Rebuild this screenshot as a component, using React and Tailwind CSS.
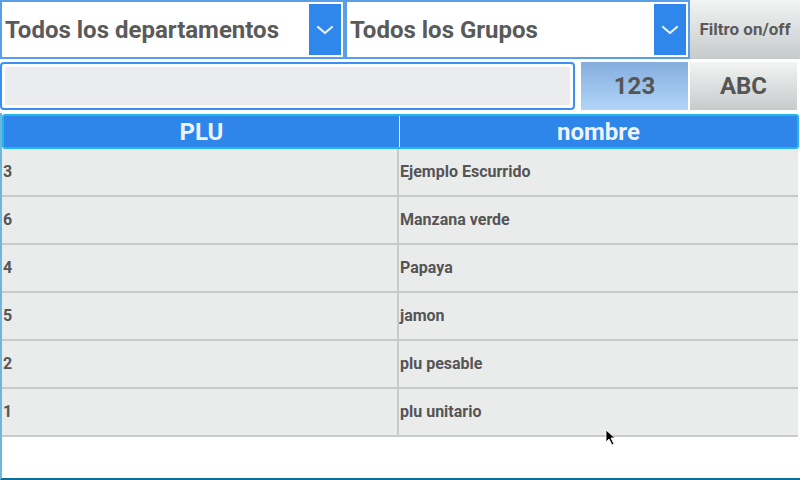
import { useState } from "react";

const rows = [
  { plu: "3", nombre: "Ejemplo Escurrido" },
  { plu: "6", nombre: "Manzana verde" },
  { plu: "4", nombre: "Papaya" },
  { plu: "5", nombre: "jamon" },
  { plu: "2", nombre: "plu pesable" },
  { plu: "1", nombre: "plu unitario" },
];

function Chevron() {
  return (
    <svg width="18" height="12" viewBox="0 0 18 12" fill="none">
      <path d="M2 3 L9 9 L16 3" stroke="#e8f0fb" strokeWidth="2.2" strokeLinecap="round" strokeLinejoin="round" />
    </svg>
  );
}

function Dropdown({ label, className }) {
  return (
    <div className={`h-[59px] border-2 border-[#5a9ee8] bg-white flex items-center p-[2px] ${className}`}>
      <span className="flex-1 pl-[1px] text-[24px] font-bold text-[#5a5a5a] whitespace-nowrap">{label}</span>
      <div className="w-[32px] h-full bg-[#2f87ec] flex items-center justify-center">
        <Chevron />
      </div>
    </div>
  );
}

export default function App() {
  const [mode, setMode] = useState("123");

  return (
    <div className="relative w-[800px] h-[480px] bg-white overflow-hidden" style={{ fontFamily: "Roboto, 'Liberation Sans', sans-serif" }}>
      <div className="flex h-[60px]">
        <Dropdown label="Todos los departamentos" className="w-[345px]" />
        <Dropdown label="Todos los Grupos" className="w-[345px]" />
        <button className="w-[110px] h-[59px] bg-gradient-to-b from-[#f3f4f4] to-[#c6cbcb] text-[17px] font-bold text-[#5a5a5a] whitespace-nowrap">
          Filtro on/off
        </button>
      </div>

      <div className="flex h-[50px] pt-[2px] gap-[6px]">
        <div className="w-[575px] h-[48px] rounded-[4px] border-2 border-[#3d8ff0] p-[3px] bg-white">
          <div className="w-full h-full bg-[#ebeced] rounded-[2px]"></div>
        </div>
        <div className="flex gap-[2px]">
          <button
            onClick={() => setMode("123")}
            className="w-[107px] h-[48px] bg-gradient-to-b from-[#85aede] to-[#b2d4f8] text-[24px] font-bold text-[#555]"
          >
            123
          </button>
          <button
            onClick={() => setMode("ABC")}
            className="w-[107px] h-[48px] bg-gradient-to-b from-[#f3f4f4] to-[#c6cbcb] text-[24px] font-bold text-[#555]"
          >
            ABC
          </button>
        </div>
      </div>

      <div className="mt-[3px] h-[367px] border-l-2 border-[#6fb6dc] border-b-2 border-b-[#0b6f98] flex flex-col">
        <div className="flex h-[35px] bg-[#2e86ea] border-2 border-[#20b8e8] rounded-[3px] mt-[1px] mr-[1px] text-[24px] font-bold text-[#eef3fa]">
          <div className="w-[396px] flex items-center justify-center border-r border-[#e0ecfa]">PLU</div>
          <div className="flex-1 flex items-center justify-center">nombre</div>
        </div>
        {rows.map((r) => (
          <div key={r.plu} className="flex h-[48px] bg-[#eaebeb] border-b-2 border-[#c9caca] text-[16px] font-bold text-[#555] mr-[2px]">
            <div className="w-[397px] flex items-center border-r-2 border-[#c9caca] pl-[1px]">{r.plu}</div>
            <div className="flex-1 flex items-center pl-[1px]">{r.nombre}</div>
          </div>
        ))}
      </div>

      <svg className="absolute left-[605px] top-[429px]" width="12" height="18" viewBox="0 0 12 18">
        <path d="M1 1 L1 13 L4 10 L7 16 L9 15 L6 9 L10 9 Z" fill="#000" stroke="#fff" strokeWidth="0.8" />
      </svg>
    </div>
  );
}
